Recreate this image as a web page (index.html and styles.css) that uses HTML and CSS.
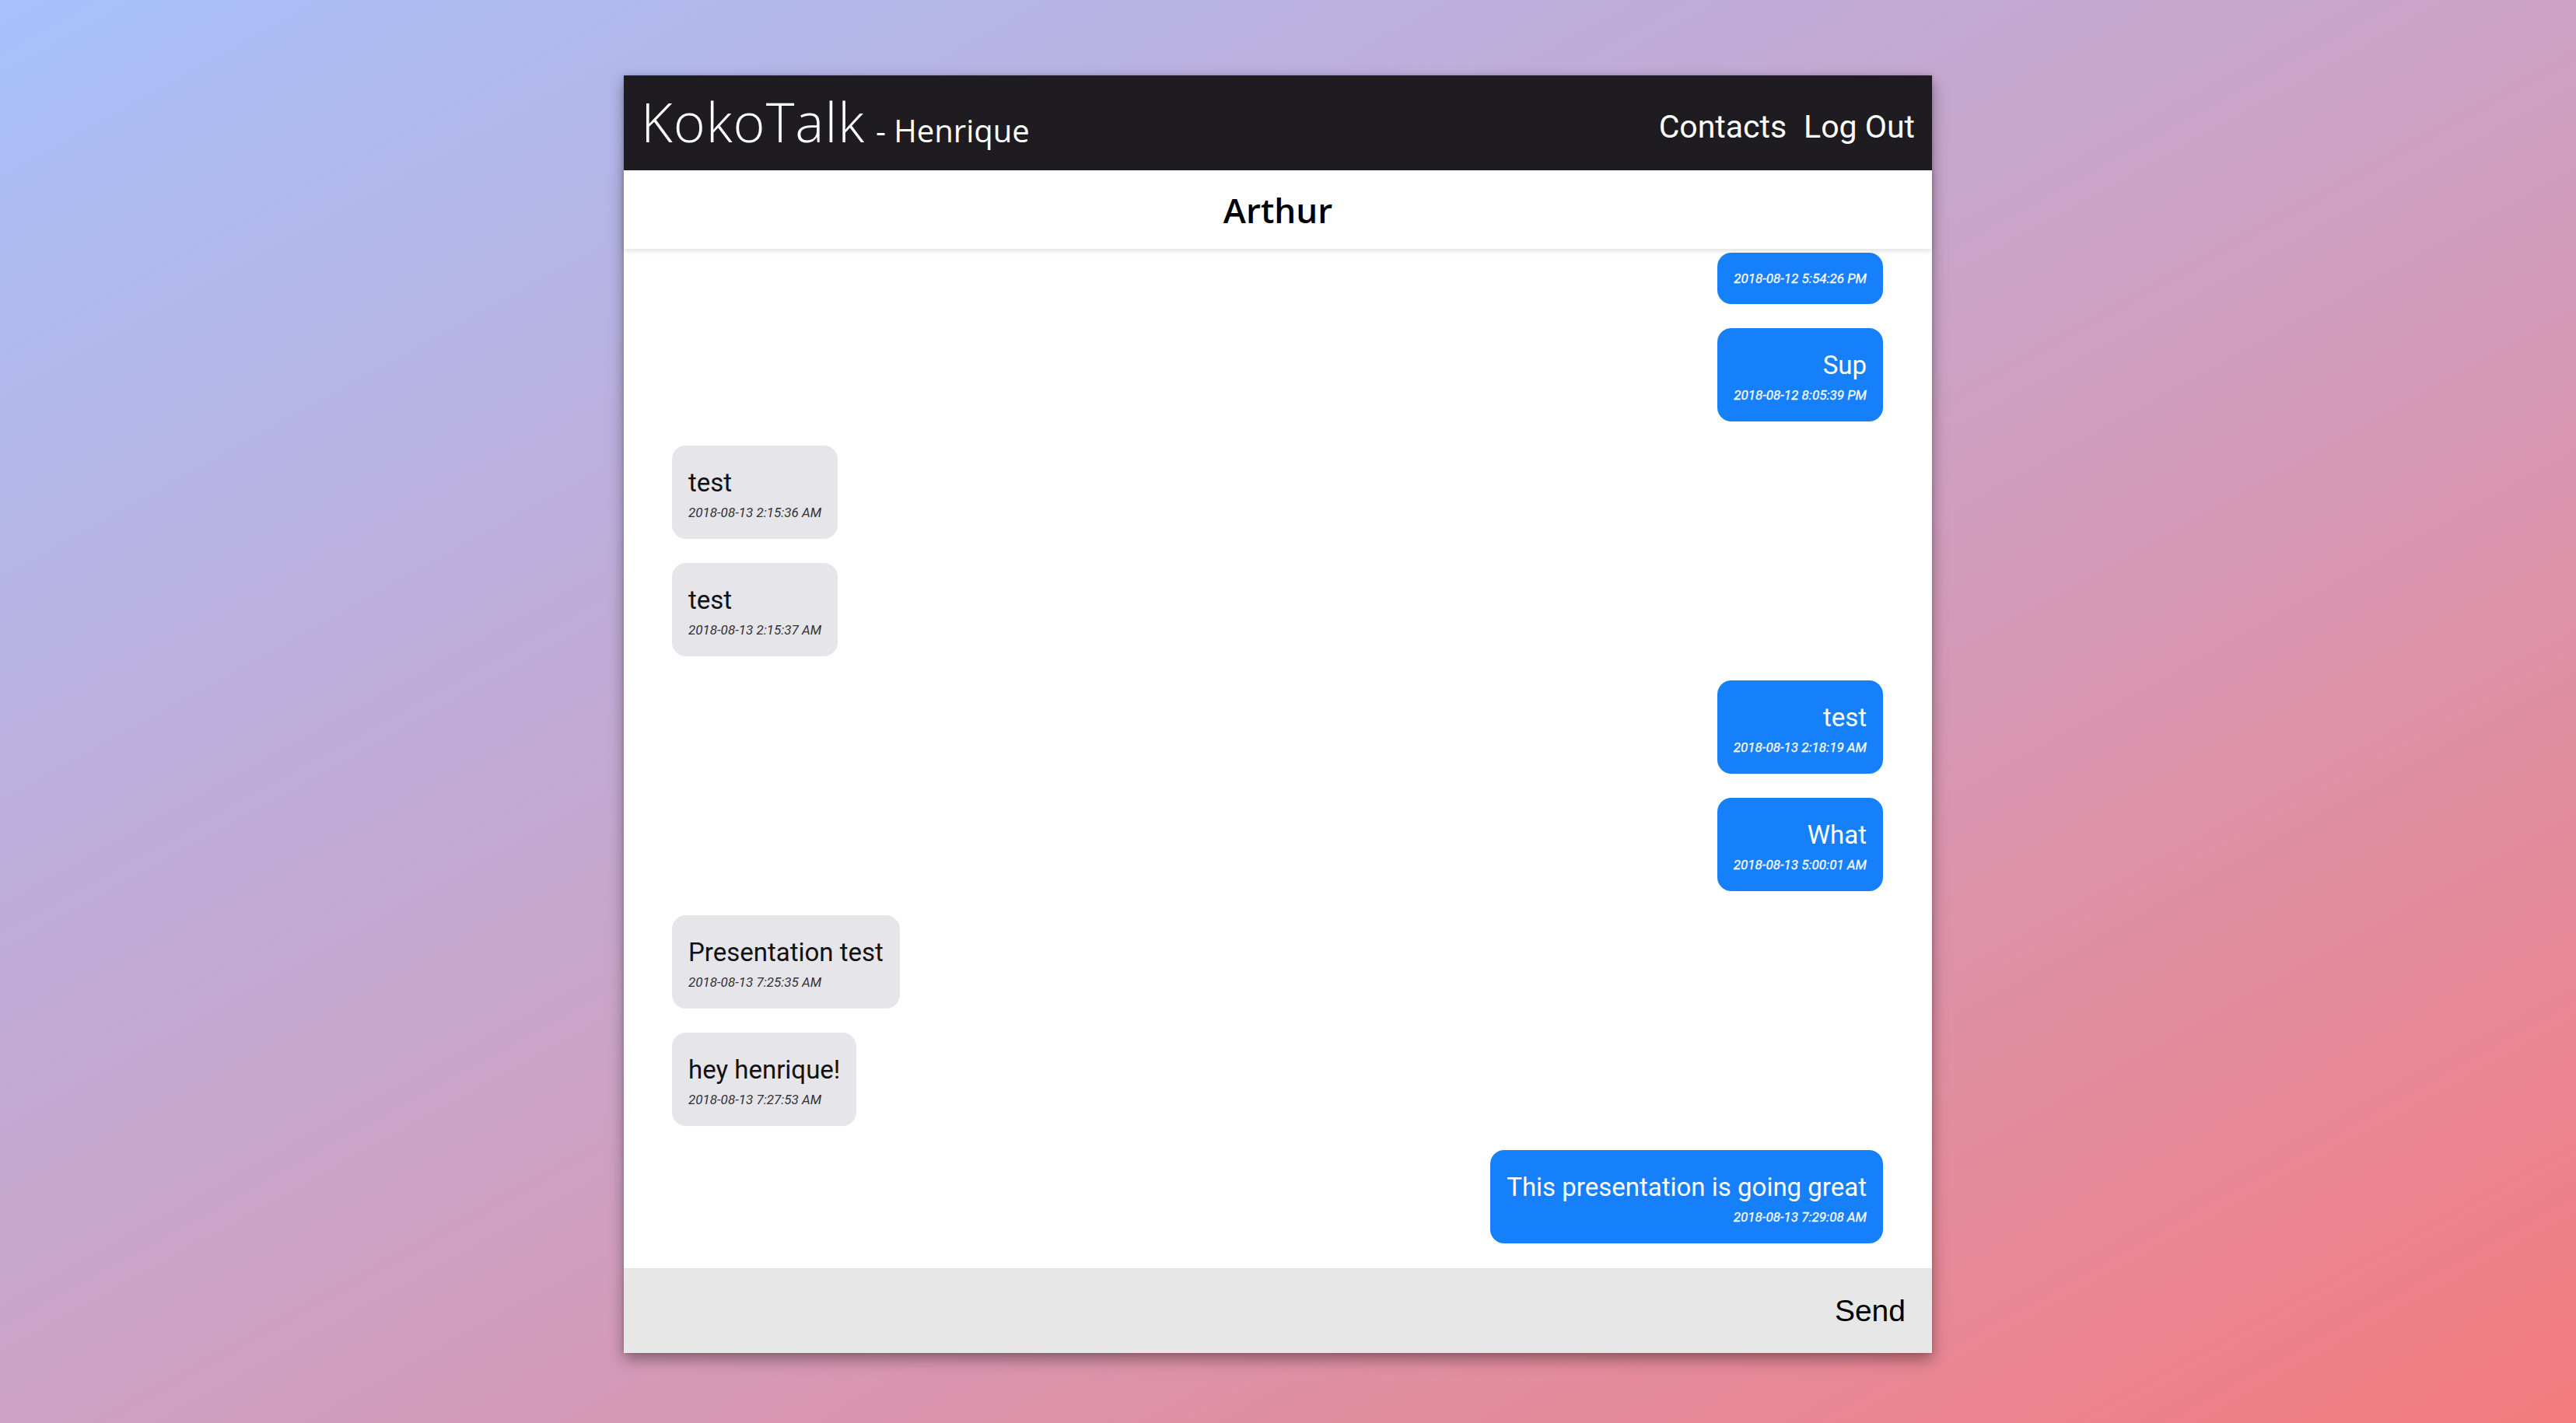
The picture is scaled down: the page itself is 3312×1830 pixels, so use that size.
FILE: index.html
```html
<!DOCTYPE html>
<html lang="en">
<head>
<meta charset="utf-8">
<title>KokoTalk</title>
<link rel="stylesheet" href="styles.css">
</head>
<body>
<div class="app">
  <header class="topbar">
    <h1 class="brand"><span class="brand-name">KokoTalk</span> <span class="brand-user">- Henrique</span></h1>
    <nav class="nav">
      <a class="nav-link" href="#">Contacts</a>
      <a class="nav-link" href="#">Log Out</a>
    </nav>
  </header>
  <div class="chat-title">Arthur</div>
  <main class="messages">
    <div class="bubble mine empty">
      <div class="ts">2018-08-12 5:54:26 PM</div>
    </div>
    <div class="bubble mine">
      <p class="text">Sup</p>
      <div class="ts">2018-08-12 8:05:39 PM</div>
    </div>
    <div class="bubble theirs">
      <p class="text">test</p>
      <div class="ts">2018-08-13 2:15:36 AM</div>
    </div>
    <div class="bubble theirs">
      <p class="text">test</p>
      <div class="ts">2018-08-13 2:15:37 AM</div>
    </div>
    <div class="bubble mine">
      <p class="text">test</p>
      <div class="ts">2018-08-13 2:18:19 AM</div>
    </div>
    <div class="bubble mine">
      <p class="text">What</p>
      <div class="ts">2018-08-13 5:00:01 AM</div>
    </div>
    <div class="bubble theirs">
      <p class="text">Presentation test</p>
      <div class="ts">2018-08-13 7:25:35 AM</div>
    </div>
    <div class="bubble theirs">
      <p class="text">hey henrique!</p>
      <div class="ts">2018-08-13 7:27:53 AM</div>
    </div>
    <div class="bubble mine">
      <p class="text">This presentation is going great</p>
      <div class="ts">2018-08-13 7:29:08 AM</div>
    </div>
  </main>
  <form class="composer">
    <input class="composer-input" type="text" aria-label="Message">
    <button class="send" type="button">Send</button>
  </form>
</div>
</body>
</html>
```
FILE: styles.css
```css
* { box-sizing: border-box; }

html, body {
  margin: 0;
  height: 100%;
}

body {
  background: linear-gradient(to bottom right, #a7c1fb 0%, #cca2c6 50%, #f47b7e 100%);
  display: flex;
  justify-content: center;
  align-items: flex-start;
  padding: 97px 26px 0 0;
  font-family: Roboto, "Liberation Sans", sans-serif;
}

.app {
  width: 1682px;
  height: 1643px;
  display: flex;
  flex-direction: column;
  background: #ffffff;
  box-shadow: 0 8px 18px rgba(0, 0, 0, 0.38), 0 0 4px rgba(0, 0, 0, 0.15);
}

/* header */
.topbar {
  height: 122px;
  flex: none;
  background: #1e1c21;
  color: #ffffff;
  display: flex;
  align-items: center;
  justify-content: space-between;
  padding: 0 22px 0 22px;
}

.brand {
  margin: 12px 0 0;
  font-weight: normal;
  line-height: 70px;
  white-space: nowrap;
}

.brand-name {
  font-family: "Open Sans", sans-serif;
  font-weight: 300;
  font-size: 70px;
  letter-spacing: 1px;
  margin-right: 6px;
}

.brand-user {
  font-family: "Open Sans", sans-serif;
  font-weight: 400;
  font-size: 40px;
}

.nav {
  display: flex;
  gap: 22px;
  margin-top: 10px;
}

.nav-link {
  color: #ffffff;
  text-decoration: none;
  font-family: Roboto, sans-serif;
  font-size: 41px;
  line-height: 48px;
}

/* chat title */
.chat-title {
  height: 101px;
  flex: none;
  display: flex;
  align-items: center;
  justify-content: center;
  font-family: "Open Sans", sans-serif;
  font-weight: 600;
  font-size: 44px;
  color: #000000;
  background: #ffffff;
  position: relative;
  z-index: 1;
  box-shadow: 0 3px 7px rgba(0, 0, 0, 0.12);
}

/* messages */
.messages {
  flex: 1;
  min-height: 0;
  overflow: hidden;
  display: flex;
  flex-direction: column;
  gap: 31px;
  padding: 5px 63px 32px 62px;
}

.bubble {
  border-radius: 18px;
  padding: 25px 21px 22px;
  max-width: 70%;
}

.bubble.empty {
  padding-top: 21px;
  padding-bottom: 21px;
}

.mine {
  align-self: flex-end;
  background: #1680fa;
  color: #ffffff;
  text-align: right;
}

.theirs {
  align-self: flex-start;
  background: #e5e5ea;
  color: #111111;
  text-align: left;
}

.text {
  margin: 0 0 3px;
  font-family: Roboto, sans-serif;
  font-size: 33px;
  line-height: 46px;
  white-space: nowrap;
}

.ts {
  font-family: Roboto, sans-serif;
  font-style: italic;
  font-size: 17px;
  line-height: 24px;
  white-space: nowrap;
}

.mine .ts {
  color: #f7faff;
  -webkit-text-stroke: 0.3px #f7faff;
}

.theirs .ts {
  color: #333333;
}

/* composer */
.composer {
  height: 109px;
  flex: none;
  margin: 0;
  display: flex;
  align-items: center;
  background: #e7e7e7;
  border-top: 1px solid #e2e2e2;
}

.composer-input {
  flex: 1;
  height: 100%;
  border: none;
  background: transparent;
  outline: none;
  font-size: 32px;
  padding: 0 22px;
}

.send {
  border: none;
  background: transparent;
  font-family: "Liberation Sans", Arial, sans-serif;
  font-size: 39px;
  color: #000000;
  padding: 0 34px 0 20px;
  height: 100%;
  cursor: pointer;
}
```
